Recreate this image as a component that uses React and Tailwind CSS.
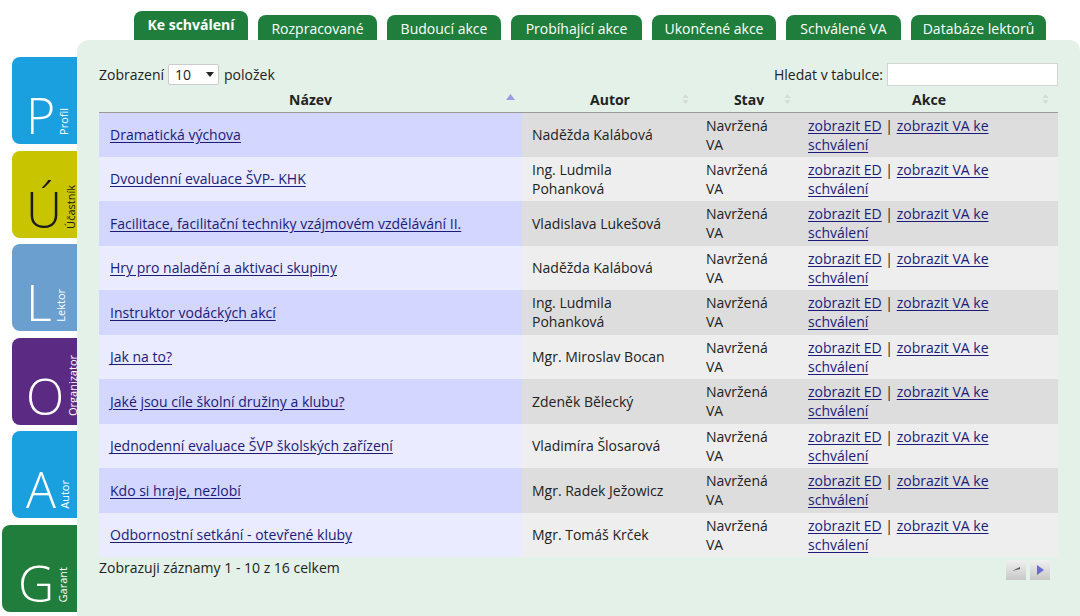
const TABS = [
  "Ke schválení",
  "Rozpracované",
  "Budoucí akce",
  "Probíhající akce",
  "Ukončené akce",
  "Schválené VA",
  "Databáze lektorů",
];

const TAB_W = [114, 119, 114, 131, 124, 115, 135];

const SIDE = [
  { letter: "P", label: "Profil", bg: "bg-[#1a9fdf]", text: "text-white", wide: false },
  { letter: "Ú", label: "Účastník", bg: "bg-[#c9c400]", text: "text-[#1a1a1a]", wide: false },
  { letter: "L", label: "Lektor", bg: "bg-[#6a9fd0]", text: "text-white", wide: false },
  { letter: "O", label: "Organizator", bg: "bg-[#5b2b84]", text: "text-white", wide: false },
  { letter: "A", label: "Autor", bg: "bg-[#1a9fdf]", text: "text-white", wide: false },
  { letter: "G", label: "Garant", bg: "bg-[#217d3c]", text: "text-white", wide: true },
];

const ROWS = [
  ["Dramatická výchova", "Naděžda Kalábová"],
  ["Dvoudenní evaluace ŠVP- KHK", "Ing. Ludmila Pohanková"],
  ["Facilitace, facilitační techniky vzájmovém vzdělávání II.", "Vladislava Lukešová"],
  ["Hry pro naladění a aktivaci skupiny", "Naděžda Kalábová"],
  ["Instruktor vodáckých akcí", "Ing. Ludmila Pohanková"],
  ["Jak na to?", "Mgr. Miroslav Bocan"],
  ["Jaké jsou cíle školní družiny a klubu?", "Zdeněk Bělecký"],
  ["Jednodenní evaluace ŠVP školských zařízení", "Vladimíra Šlosarová"],
  ["Kdo si hraje, nezlobí", "Mgr. Radek Ježowicz"],
  ["Odbornostní setkání - otevřené kluby", "Mgr. Tomáš Krček"],
];

function SortBoth() {
  return (
    <svg width="7" height="12" viewBox="0 0 7 12" className="absolute right-[9px] top-[5px]">
      <path d="M3.5 1 L6.5 5 L0.5 5 Z" fill="#d6dcd7" />
      <path d="M3.5 11 L6.5 7 L0.5 7 Z" fill="#d6dcd7" />
    </svg>
  );
}

function SideTab({ t }) {
  return (
    <div
      className={`${t.bg} ${t.text} h-[87px] rounded-l-[8px] flex items-end pb-[4px] ${
        t.wide ? "w-[75px] ml-[2px] pl-[16px]" : "w-[65px] ml-[12px] pl-[14px]"
      }`}
    >
      <span className="text-[50px] leading-none font-light">{t.letter}</span>
      <span className="text-[11px] leading-none ml-[3px] mb-[5px] [writing-mode:vertical-rl] rotate-180">
        {t.label}
      </span>
    </div>
  );
}

const link = "text-[#1b1b7a] underline underline-offset-[2px]";

export default function App() {
  return (
    <div
      className="w-[1080px] h-[616px] bg-white overflow-hidden text-[#222]"
      style={{ fontFamily: "'Open Sans', 'Noto Sans', sans-serif" }}
    >
      {/* top tabs */}
      <div className="flex items-end gap-[10px] pl-[134px] pt-[11px] h-[40px]">
        {TABS.map((tab, i) => (
          <div
            key={tab}
            className={`bg-[#1f7e3b] text-white rounded-t-[8px] flex items-center justify-center text-[14px] ${
              i === 0 ? "h-[29px] font-bold pb-[2px]" : "h-[25px] pt-[1px]"
            }`}
            style={{ width: TAB_W[i] }}
          >
            {tab}
          </div>
        ))}
      </div>

      <div className="flex h-[576px]">
        {/* side role tabs */}
        <div className="w-[77px] pt-[17px] flex flex-col gap-[6.5px]">
          {SIDE.map((t) => (
            <SideTab key={t.letter} t={t} />
          ))}
        </div>

        {/* content panel */}
        <div className="flex-1 bg-[#e4f1e8] rounded-tl-[12px] rounded-tr-[10px] pl-[22px] pr-[22px] pt-[22px] text-[14px]">
          <div className="flex items-center justify-between h-[24px]">
            <div className="flex items-center">
              <span>Zobrazení</span>
              <div className="ml-[4px] w-[51px] h-[21px] bg-white border border-[#ccc] rounded-[2px] flex items-center justify-between pl-[6px] pr-[4px] text-[14px]">
                <span>10</span>
                <svg width="8" height="5" viewBox="0 0 8 5">
                  <path d="M0 0 L8 0 L4 5 Z" fill="#222" />
                </svg>
              </div>
              <span className="ml-[5px]">položek</span>
            </div>
            <div className="flex items-center">
              <span>Hledat v tabulce:</span>
              <div className="ml-[4px] w-[171px] h-[23px] bg-white border border-[#d4d4d4]" />
            </div>
          </div>

          <table className="table-fixed border-collapse w-[959px] mt-[2px]">
            <colgroup>
              <col className="w-[423px]" />
              <col className="w-[176px]" />
              <col className="w-[102px]" />
              <col className="w-[258px]" />
            </colgroup>
            <thead>
              <tr className="h-[24px] border-b border-[#9a9a9a]">
                <th className="relative font-bold">
                  Název
                  <svg width="9" height="6" viewBox="0 0 9 6" className="absolute right-[7px] top-[6px]">
                    <path d="M4.5 0 L9 6 L0 6 Z" fill="#9c9ce0" />
                  </svg>
                </th>
                <th className="relative font-bold">
                  Autor
                  <SortBoth />
                </th>
                <th className="relative font-bold">
                  Stav
                  <SortBoth />
                </th>
                <th className="relative font-bold">
                  Akce
                  <SortBoth />
                </th>
              </tr>
            </thead>
            <tbody>
              {ROWS.map(([name, author], i) => {
                const odd = i % 2 === 0;
                return (
                  <tr key={name} className={`h-[44.5px] ${odd ? "bg-[#dddddd]" : "bg-[#eeeeee]"}`}>
                    <td className={`pl-[11px] ${odd ? "bg-[#d3d6ff]" : "bg-[#eaebff]"}`}>
                      <a className={link}>{name}</a>
                    </td>
                    <td className="pl-[10px] pr-[22px] leading-[19px]">{author}</td>
                    <td className="pl-[8px] leading-[19px]">
                      Navržená
                      <br />
                      VA
                    </td>
                    <td className="pl-[8px] pr-[55px] leading-[19px]">
                      <a className={link}>zobrazit ED</a>
                      {" | "}
                      <a className={link}>zobrazit VA ke schválení</a>
                    </td>
                  </tr>
                );
              })}
            </tbody>
          </table>

          <div className="flex justify-between items-start">
            <span>Zobrazuji záznamy 1 - 10 z 16 celkem</span>
            <div className="flex gap-[4px] mt-[3px] mr-[8px]">
              <div className="w-[20px] h-[20px] bg-gradient-to-b from-[#f0f0f0] to-[#c8c8c8] flex items-center justify-center">
                <svg width="10" height="8" viewBox="0 0 10 8">
                  <path d="M1 5 L9 1 L9 3 Z" fill="#555" />
                </svg>
              </div>
              <div className="w-[20px] h-[20px] bg-gradient-to-b from-[#f0f0f0] to-[#c8c8c8] flex items-center justify-center">
                <svg width="8" height="10" viewBox="0 0 8 10">
                  <path d="M1 0 L8 5 L1 10 Z" fill="#6a6ad0" />
                </svg>
              </div>
            </div>
          </div>
        </div>
      </div>
    </div>
  );
}
